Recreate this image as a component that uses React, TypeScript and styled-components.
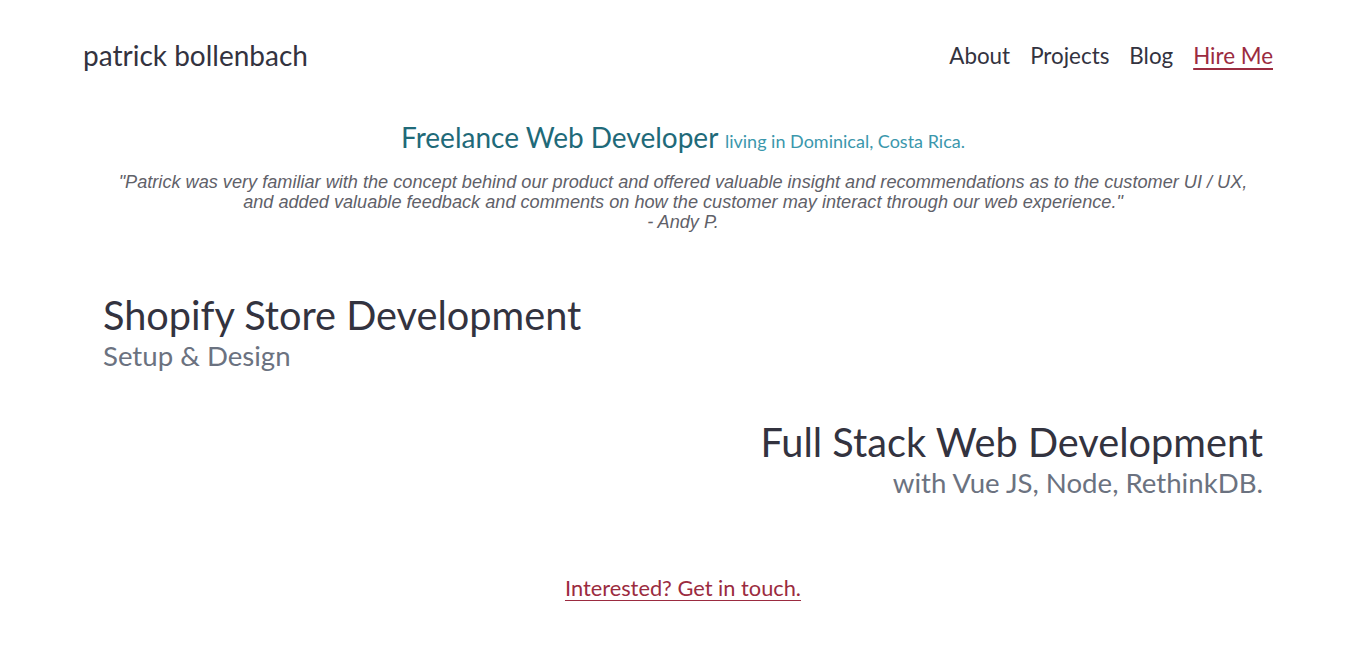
import React from "react";
import styled, { createGlobalStyle } from "styled-components";

const Global = createGlobalStyle`
  html, body { margin: 0; padding: 0; background: #fff; }
  body { font-family: Lato, "Open Sans", sans-serif; color: #33333f; }
  * { box-sizing: border-box; }
`;

const Page = styled.div`
  width: 1200px;
  margin: 0 auto;
`;

const Header = styled.header`
  display: flex;
  align-items: center;
  justify-content: space-between;
  height: 112px;
  padding-bottom: 2px;
`;

const Logo = styled.div`
  font-size: 28px;
  color: #33333f;
  font-weight: 400;
`;

const Nav = styled.nav`
  display: flex;
`;

const NavLink = styled.a<{ $accent?: boolean }>`
  font-size: 22.4px;
  padding: 0 10px;
  color: ${(p) => (p.$accent ? "#9b2b40" : "#33333f")};
  text-decoration: ${(p) => (p.$accent ? "underline" : "none")};
  text-underline-offset: 4px;
  text-decoration-thickness: 2px;
`;

const Intro = styled.section`
  text-align: center;
  padding-top: 8px;
`;

const Title = styled.h1`
  margin: 0;
  font-size: 28px;
  font-weight: 400;
  color: #1f6a79;
`;

const Small = styled.span`
  font-size: 18px;
  color: #3b97ac;
`;

const Quote = styled.blockquote`
  margin: 18px 0 0;
  font-family: "Liberation Sans", Arial, sans-serif;
  font-style: italic;
  font-weight: 400;
  font-size: 18.15px;
  line-height: 20px;
  color: #5f6169;
`;

const Service = styled.section<{ $right?: boolean }>`
  padding: 0 20px;
  text-align: ${(p) => (p.$right ? "right" : "left")};
  margin-top: ${(p) => (p.$right ? "45px" : "60px")};
`;

const ServiceTitle = styled.h2`
  margin: 0;
  font-size: 39.7px;
  line-height: 46px;
  font-weight: 400;
  color: #33333f;
`;

const ServiceSub = styled.div`
  font-size: 27.6px;
  line-height: 36px;
  color: #6b7280;
`;

const Cta = styled.div`
  text-align: center;
  margin-top: 73px;
`;

const CtaLink = styled.a`
  font-size: 21.8px;
  color: #9b2b40;
  text-decoration: underline;
  text-underline-offset: 4px;
  text-decoration-thickness: 2px;
`;

export default function App() {
  return (
    <>
      <Global />
      <Page>
        <Header>
          <Logo>patrick bollenbach</Logo>
          <Nav>
            <NavLink href="#">About</NavLink>
            <NavLink href="#">Projects</NavLink>
            <NavLink href="#">Blog</NavLink>
            <NavLink href="#" $accent>Hire Me</NavLink>
          </Nav>
        </Header>
        <Intro>
          <Title>
            Freelance Web Developer <Small>living in Dominical, Costa Rica.</Small>
          </Title>
          <Quote>
            "Patrick was very familiar with the concept behind our product and offered valuable insight and recommendations as to the customer UI / UX,
            <br />
            and added valuable feedback and comments on how the customer may interact through our web experience."
            <br />- Andy P.
          </Quote>
        </Intro>
        <Service>
          <ServiceTitle>Shopify Store Development</ServiceTitle>
          <ServiceSub>Setup &amp; Design</ServiceSub>
        </Service>
        <Service $right>
          <ServiceTitle>Full Stack Web Development</ServiceTitle>
          <ServiceSub>with Vue JS, Node, RethinkDB.</ServiceSub>
        </Service>
        <Cta>
          <CtaLink href="#">Interested? Get in touch.</CtaLink>
        </Cta>
      </Page>
    </>
  );
}
